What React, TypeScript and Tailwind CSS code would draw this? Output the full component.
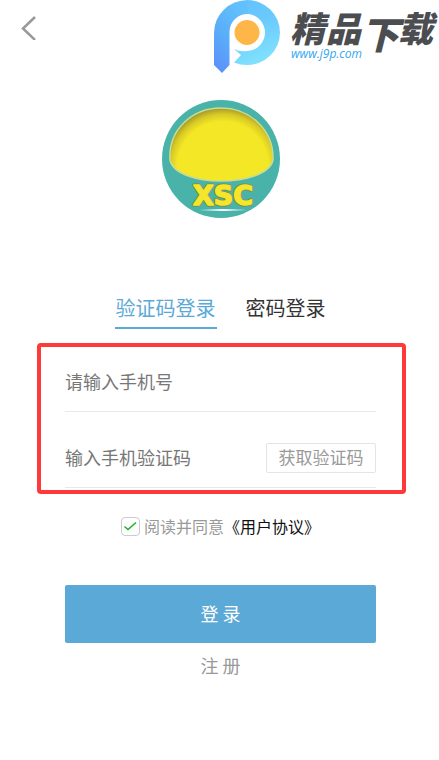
import { useState } from "react";

function SiteMark() {
  return (
    <svg viewBox="0 0 227 74" className="h-[74px] w-[227px]" role="img" aria-label="精品下载">
      <defs>
        <linearGradient id="stem" x1="0.6" y1="0" x2="0.1" y2="1">
          <stop offset="0" stopColor="#62c0fc" />
          <stop offset="0.5" stopColor="#5aaefa" />
          <stop offset="1" stopColor="#5c8ff8" />
        </linearGradient>
        <linearGradient id="bowl" x1="0" y1="0" x2="0.3" y2="1">
          <stop offset="0" stopColor="#62c0fc" />
          <stop offset="0.5" stopColor="#6bcbfd" />
          <stop offset="1" stopColor="#7fe0fe" />
        </linearGradient>
      </defs>
      <path
        d="M22 49Q28 52 35 51A18 18.500 0 0 0 35 14V0A33 32.500 0 0 1 35 65Q28 65 22 62.500L29 55Z"
        fill="url(#bowl)"
      />
      <path
        d="M35.500 0A33.500 33 0 0 0 2 33V65L10 73L17.500 65V32A18 18 0 0 1 35.500 14Z"
        fill="url(#stem)"
      />
      <circle cx="35" cy="32.500" r="12.500" fill="#ffb648" />
      <g
        fill="#4b4d50"
        fontSize="35"
        className="font-['Noto_Sans_CJK_SC',sans-serif] font-black italic"
      >
        <text x="78" y="42">精</text>
        <text x="114" y="42">品</text>
        <text x="149" y="49" fontSize="38">下</text>
        <text x="186" y="42">载</text>
      </g>
      <text
        x="79"
        y="58"
        fontSize="12"
        fill="#35a7ee"
        className="font-['Open_Sans',sans-serif] font-medium italic"
      >
        www.j9p.com
      </text>
    </svg>
  );
}

function AppLogo() {
  return (
    <svg viewBox="0 0 120 120" className="size-[120px]" role="img" aria-label="XSC">
      <defs>
        <radialGradient id="dome" gradientUnits="userSpaceOnUse" cx="62" cy="68" r="60">
          <stop offset="0.76" stopColor="#f3e726" />
          <stop offset="0.88" stopColor="#d9c926" />
          <stop offset="1" stopColor="#9a932c" />
        </radialGradient>
        <linearGradient id="shine">
          <stop offset="0" stopColor="#fff" stopOpacity="0" />
          <stop offset="0.5" stopColor="#fff" />
          <stop offset="1" stopColor="#fff" stopOpacity="0" />
        </linearGradient>
      </defs>
      <circle cx="60" cy="60" r="59" fill="#49b2a9" />
      <path
        d="M9 61C7 31 31 9 60 9S113 31 112 61C109 75 84 82 60 82S12 75 9 61Z"
        fill="url(#dome)"
        stroke="#c9dc91"
        strokeWidth="1.500"
      />
      <g
        className="font-['DejaVu_Sans',sans-serif] font-bold"
        fontSize="27"
        strokeWidth="1.500"
        strokeLinejoin="round"
        textAnchor="middle"
      >
        <text x="62" y="106" fill="#f5e52b" stroke="#7f8a3e" strokeWidth="3">XSC</text>
        <text x="62" y="106" fill="#f5e52b" stroke="#f5e52b">XSC</text>
      </g>
      <rect x="38" y="110" width="48" height="2" fill="url(#shine)" />
    </svg>
  );
}

export default function App() {
  const [agreed, setAgreed] = useState(true);
  const [phone, setPhone] = useState("");
  const [code, setCode] = useState("");

  return (
    <div className="min-h-screen bg-white font-['Noto_Sans_CJK_SC',sans-serif] text-[#333]">
      <header className="flex items-start justify-between pl-4">
        <button type="button" aria-label="返回" className="mt-4 flex size-6 items-center justify-center">
          <svg viewBox="0 0 24 24" className="size-6" fill="none" stroke="#999" strokeWidth="2.500">
            <path d="M19 1L7 12.500L19 24" />
          </svg>
        </button>
        <SiteMark />
      </header>

      <main className="pr-[63px] pl-[65px]">
        <div className="mt-[25px] flex justify-center">
          <AppLogo />
        </div>

        <nav className="mt-[73px] flex justify-center gap-7 text-xl leading-8">
          <button type="button" className="border-b-2 border-[#5ba9d6] px-px pb-[3px] text-[#5ba9d6]">
            验证码登录
          </button>
          <button type="button" className="border-b-2 border-transparent px-px pb-[3px]">
            密码登录
          </button>
        </nav>

        <form onSubmit={(e) => e.preventDefault()}>
          <div className="mt-[14px] -mr-[30px] -ml-7 rounded border-4 border-[#ff3838] pt-5 pr-[26px] pb-[2px] pl-6">
            <div className="flex border-b border-[#e6eaee] pb-[14px]">
              <input
                type="tel"
                aria-label="手机号"
                placeholder="请输入手机号"
                value={phone}
                onChange={(e) => setPhone(e.target.value)}
                className="h-[30px] min-w-0 flex-1 pb-[3px] text-lg outline-none placeholder:text-[#777]"
              />
            </div>
            <div className="mt-[31px] flex border-b border-[#e6eaee] pb-[14px]">
              <input
                type="text"
                aria-label="手机验证码"
                placeholder="输入手机验证码"
                value={code}
                onChange={(e) => setCode(e.target.value)}
                className="h-[30px] min-w-0 flex-1 pb-[3px] text-lg outline-none placeholder:text-[#777]"
              />
              <button
                type="button"
                className="h-[30px] w-[110px] rounded-xs border border-[#e4e4e4] pb-[2px] text-[17px] leading-6 text-[#999]"
              >
                获取验证码
              </button>
            </div>
          </div>

          <div className="mt-5 flex items-center justify-center text-base leading-6">
            <label className="flex items-center gap-1 text-[#999]">
              <span className="grid size-[19px]">
                <input
                  type="checkbox"
                  checked={agreed}
                  onChange={(e) => setAgreed(e.target.checked)}
                  className="peer col-start-1 row-start-1 size-[19px] appearance-none rounded border border-[#ccc] bg-white"
                />
                <svg
                  viewBox="0 0 19 19"
                  className="pointer-events-none invisible col-start-1 row-start-1 peer-checked:visible"
                  fill="none"
                  stroke="#18b51c"
                  strokeWidth="1.500"
                >
                  <path d="M3.500 9.500L7 12.500L15 5.500" />
                </svg>
              </span>
              阅读并同意
            </label>
            <a href="#agreement" className="text-[#111]">《用户协议》</a>
          </div>

          <button type="submit" className="mt-[47px] h-[58px] w-full rounded-xs bg-[#5ba9d6] pb-[3px] text-lg text-white">
            登 录
          </button>
        </form>

        <div className="mt-1.5 flex justify-center">
          <a href="#register" className="text-lg leading-8 text-[#999]">注 册</a>
        </div>
      </main>
    </div>
  );
}
